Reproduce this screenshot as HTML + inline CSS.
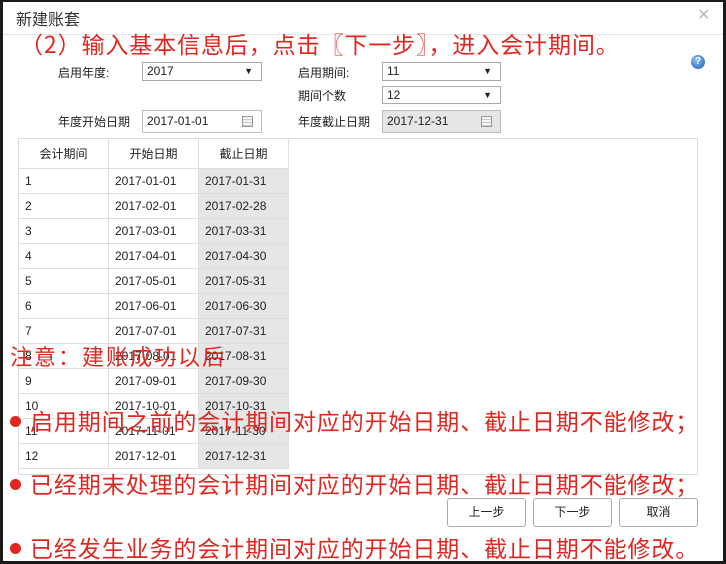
<!DOCTYPE html>
<html><head><meta charset="utf-8"><style>
*{margin:0;padding:0;box-sizing:border-box}
body{width:726px;height:564px;background:#1a1a1a;position:relative;overflow:hidden;font-family:"Liberation Sans","Noto Sans CJK SC",sans-serif}
.dlg{position:absolute;left:3px;top:2px;width:720px;height:559px;background:#fff}
.a{position:absolute}
.t{font-size:12px;color:#222}
.sel{position:absolute;border:1px solid #a9a9a9;background:#fff;font-size:12px;padding-left:4px;color:#222;line-height:17px}
.sel:after{content:"▼";position:absolute;right:8px;top:0;font-size:9px}
.in{position:absolute;border:1px solid #bdbdbd;font-size:12px;padding-left:4px;line-height:21px;color:#222}
.cal{position:absolute;right:8px;top:5px;width:11px;height:11px;border:1px solid #999;background:repeating-linear-gradient(0deg,#ccc 0 1px,#f4f4f4 1px 3px)}
table{position:absolute;left:18px;top:138px;border-collapse:collapse;font-size:12px;color:#222}
td{border:1px solid #ddd;height:25px;width:90px;padding-left:6px}
th{border:1px solid #ddd;height:30px;width:90px;font-weight:normal}
td.g{background:#e6e6e6}
.red{position:absolute;color:#e0261f;white-space:nowrap;font-family:"Noto Sans CJK SC",sans-serif}
.btn{position:absolute;top:498px;width:79px;height:29px;border:1px solid #aaa;border-radius:3px;background:#fff;font-size:12px;text-align:center;line-height:27px;color:#222}
.dot{display:inline-block;width:11px;height:11px;border-radius:50%;background:#e0261f;margin-right:9px;vertical-align:middle;position:relative;top:-2px}
</style></head><body>
<div class="dlg"></div>
<div class="a" style="left:16px;top:6px;font-size:16px;color:#333">新建账套</div>
<div class="a" style="left:697px;top:5px;font-size:16px;color:#bbb">✕</div>
<div class="a" style="left:3px;top:34px;width:720px;height:1px;background:#e5e5e5"></div>
<div class="red" style="left:20px;top:26px;font-size:23px;letter-spacing:0.9px">（2）输入基本信息后，点击〖下一步〗，进入会计期间。</div>
<div class="a" style="left:691px;top:55px;width:14px;height:14px;border-radius:50%;background:radial-gradient(circle at 40% 35%,#8fc0f0,#1f5fb0);color:#fff;font-size:10px;font-weight:bold;text-align:center;line-height:14px">?</div>
<div class="a t" style="left:58px;top:64px">启用年度:</div>
<div class="sel" style="left:142px;top:62px;width:120px;height:19px">2017</div>
<div class="a t" style="left:298px;top:64px">启用期间:</div>
<div class="sel" style="left:382px;top:62px;width:119px;height:19px">11</div>
<div class="a t" style="left:298px;top:87px">期间个数</div>
<div class="sel" style="left:382px;top:86px;width:119px;height:18px">12</div>
<div class="a t" style="left:58px;top:113px">年度开始日期</div>
<div class="in" style="left:142px;top:110px;width:120px;height:23px">2017-01-01<div class="cal"></div></div>
<div class="a t" style="left:298px;top:113px">年度截止日期</div>
<div class="in" style="left:382px;top:110px;width:119px;height:23px;background:#e6e6e6">2017-12-31<div class="cal"></div></div>
<div class="a" style="left:18px;top:138px;width:680px;height:337px;border:1px solid #ddd"></div>
<table>
<tr><th>会计期间</th><th>开始日期</th><th>截止日期</th></tr>
<tr><td>1</td><td>2017-01-01</td><td class="g">2017-01-31</td></tr>
<tr><td>2</td><td>2017-02-01</td><td class="g">2017-02-28</td></tr>
<tr><td>3</td><td>2017-03-01</td><td class="g">2017-03-31</td></tr>
<tr><td>4</td><td>2017-04-01</td><td class="g">2017-04-30</td></tr>
<tr><td>5</td><td>2017-05-01</td><td class="g">2017-05-31</td></tr>
<tr><td>6</td><td>2017-06-01</td><td class="g">2017-06-30</td></tr>
<tr><td>7</td><td>2017-07-01</td><td class="g">2017-07-31</td></tr>
<tr><td>8</td><td>2017-08-01</td><td class="g">2017-08-31</td></tr>
<tr><td>9</td><td>2017-09-01</td><td class="g">2017-09-30</td></tr>
<tr><td>10</td><td>2017-10-01</td><td class="g">2017-10-31</td></tr>
<tr><td>11</td><td>2017-11-01</td><td class="g">2017-11-30</td></tr>
<tr><td>12</td><td>2017-12-01</td><td class="g">2017-12-31</td></tr>
</table>
<div class="red" style="left:10px;top:340px;font-size:22px;letter-spacing:2px">注意：建账成功以后</div>
<div class="red" style="left:10px;top:403px;font-size:23px;letter-spacing:0.9px"><span class="dot"></span>启用期间之前的会计期间对应的开始日期、截止日期不能修改；</div>
<div class="red" style="left:10px;top:466px;font-size:23px;letter-spacing:0.9px"><span class="dot"></span>已经期末处理的会计期间对应的开始日期、截止日期不能修改；</div>
<div class="btn" style="left:447px">上一步</div>
<div class="btn" style="left:533px">下一步</div>
<div class="btn" style="left:619px">取消</div>
<div class="red" style="left:10px;top:530px;font-size:23px;letter-spacing:0.9px"><span class="dot"></span>已经发生业务的会计期间对应的开始日期、截止日期不能修改。</div>
</body></html>
